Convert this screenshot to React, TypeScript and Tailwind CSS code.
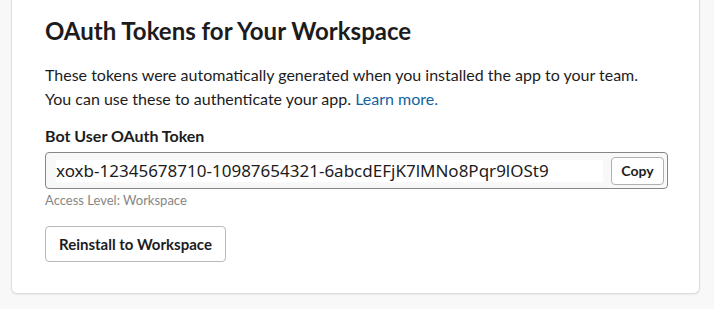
export default function App() {
  return (
    <div className="min-h-[309px] w-[714px] bg-[#f8f8f8] font-['Lato','Liberation_Sans',sans-serif] text-[#1d1c1d]">
      <div className="ml-[11px] w-[689px] rounded-b-[6px] border-x border-b border-[#dddddd] bg-white px-[33px] pb-[31px] pt-[14px] shadow-[0_1px_2px_rgba(0,0,0,0.06)]">
        {/* Header */}
        <h2 className="text-[24px] font-bold leading-[34px]">OAuth Tokens for Your Workspace</h2>
        <p className="mt-[15px] text-[16px] leading-[24px]">
          These tokens were automatically generated when you installed the app to your team.
          <br />
          You can use these to authenticate your app.{' '}
          <a href="#" className="text-[#1264a3]">
            Learn more.
          </a>
        </p>

        {/* Token field */}
        <div className="mt-[13px]">
          <label className="block text-[16px] font-bold leading-[24px]">Bot User OAuth Token</label>
          <div className="mt-[4px] flex h-[37px] w-[623px] items-center rounded-[4px] border border-[#868686] bg-[#f8f8f8] pl-[10px] pr-[3px]">
            <input
              readOnly
              value="xoxb-12345678710-10987654321-6abcdEFjK7lMNo8Pqr9lOSt9"
              className="h-[22px] w-[547px] bg-white font-['Noto_Sans',sans-serif] text-[17px] text-[#1d1c1d] outline-none"
            />
            <button className="ml-auto h-[28px] w-[53px] rounded-[4px] border border-[#b0b0b0] bg-white text-[14px] font-bold text-[#1d1c1d]">
              Copy
            </button>
          </div>
          <div className="mt-[3px] text-[13px] leading-[16px] text-[#868686]">Access Level: Workspace</div>
        </div>

        <button className="mt-[18px] h-[36px] rounded-[4px] border border-[#b9b9b9] bg-white px-[13px] text-[15px] font-bold text-[#1d1c1d]">
          Reinstall to Workspace
        </button>
      </div>
    </div>
  )
}
